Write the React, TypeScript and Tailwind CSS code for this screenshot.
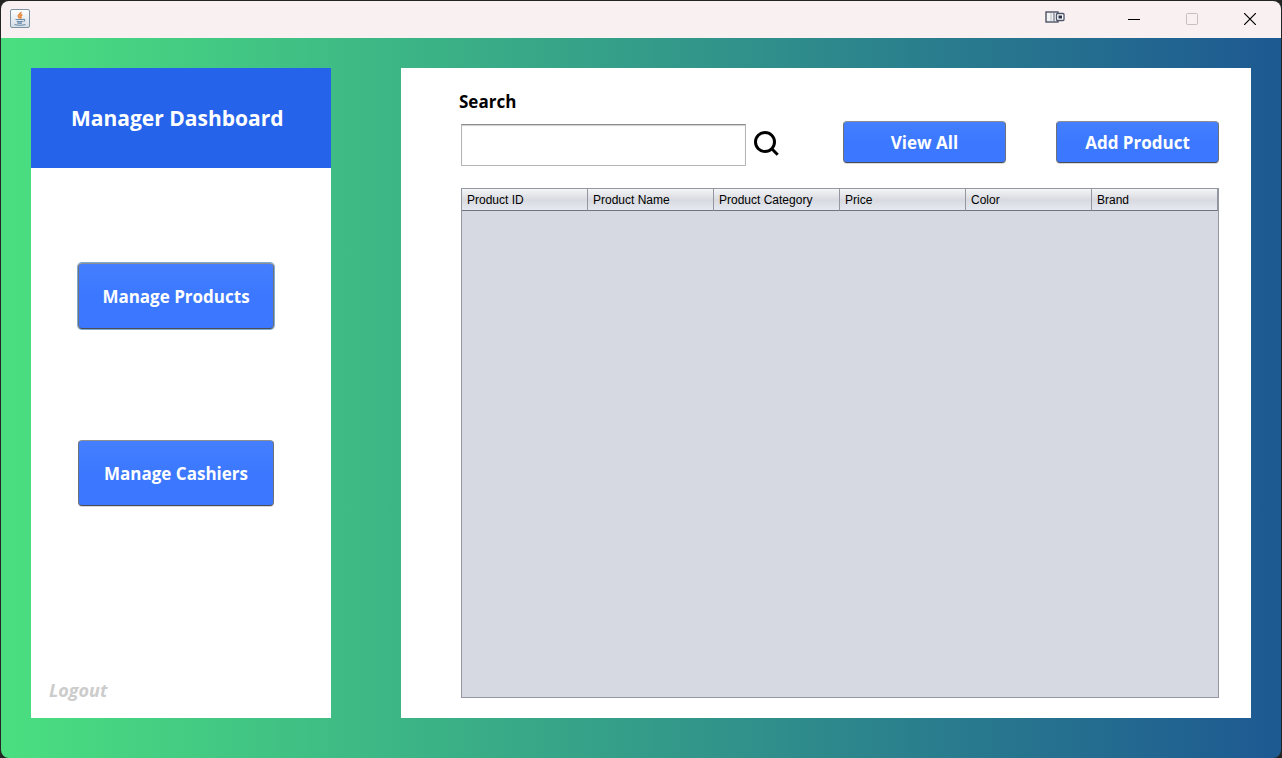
import React from "react";

const columns = ["Product ID", "Product Name", "Product Category", "Price", "Color", "Brand"];

const buttonBase =
  "rounded border border-t-[#8c9094] border-x-[#6d7178] border-b-[#4a4d55] bg-linear-to-b from-[#457fff] via-[#3b78ff] to-[#3b78ff] pt-0.5 font-bold text-white text-[17px] leading-7 shadow-[0_1px_0_#d8d8d8]";

function JavaIcon() {
  return (
    <svg width="20" height="20" viewBox="0 0 20 20" fill="none" aria-hidden="true">
      <defs>
        <linearGradient id="tile" x1="0" y1="0" x2="0" y2="1">
          <stop offset="0" stopColor="#ffffff" />
          <stop offset="1" stopColor="#d3dde5" />
        </linearGradient>
      </defs>
      <rect x="0.5" y="0.5" width="19" height="18" rx="1.5" fill="url(#tile)" stroke="#7d92a5" />
      <path d="M10.8 3c.8 1.700-3.300 2.700-2.300 4.600.4.700 1 1 1.100 1.800M12.300 5.700c-2 .8-2.300 1.600-1.500 2.500.4.500 0 1-.4 1.300" stroke="#e8893c" strokeWidth="1.800" />
      <path d="M5.500 10.500h7.700M6.700 12.200c1.800.6 4.200.6 6 0M7.300 13.900c1.500.5 3.300.5 4.700 0M13.200 10.500c2-.5 2 1.500.2 2M4.500 15.500c2.500 1 8.500 1 11 0" stroke="#6c8dab" strokeWidth="1.200" />
    </svg>
  );
}

function TitleBar() {
  return (
    <header className="flex h-[37px] items-center bg-[#f9f0f1] pb-0.5 pl-[9px]">
      <JavaIcon />
      <svg className="mr-10 mb-1 ml-auto" width="20" height="14" viewBox="0 0 20 14" fill="none" aria-hidden="true">
        <rect x="1" y="2" width="12" height="10" fill="#f2f3f5" stroke="#3f465a" strokeWidth="1.300" />
        <path d="M6 3v8" stroke="#d6d8dd" strokeWidth="2" />
        <path d="M9 3v8" stroke="#a3a8b4" strokeWidth="2" />
        <rect x="11.500" y="3.500" width="7.500" height="7" rx="1" fill="#fff" stroke="#4d5568" strokeWidth="1.300" />
        <rect x="13.500" y="5.500" width="3.500" height="3" fill="#29324a" />
      </svg>
      <button type="button" aria-label="Minimize" className="flex h-full w-[58px] items-center justify-center">
        <svg width="12" height="12" viewBox="0 0 12 12"><path d="M0 6.500h12" stroke="#000" /></svg>
      </button>
      <button type="button" disabled aria-label="Maximize" className="flex h-full w-[58px] items-center justify-center">
        <svg width="12" height="12" viewBox="0 0 12 12" fill="none"><rect x="0.500" y="0.500" width="11" height="11" rx="1" stroke="#c5bfc0" /></svg>
      </button>
      <button type="button" aria-label="Close" className="mr-0.5 flex h-full w-[58px] items-center justify-center">
        <svg width="12" height="12" viewBox="0 0 12 12"><path d="M0 0l12 12M12 0L0 12" stroke="#000" strokeWidth="1.200" /></svg>
      </button>
    </header>
  );
}

function Sidebar() {
  return (
    <nav className="flex w-[300px] shrink-0 flex-col bg-white">
      <div className="flex h-[100px] items-center bg-[#2563eb] pl-10">
        <h1 className="text-[21px] leading-8 font-bold whitespace-nowrap text-white">Manager Dashboard</h1>
      </div>
      <div className="flex flex-col gap-[111px] pt-[95px] pr-[57px] pl-[47px]">
        <button type="button" className={`${buttonBase} h-[66px] ring-1 ring-[#7fabd0]`}>Manage Products</button>
        <button type="button" className={`${buttonBase} h-[66px]`}>Manage Cashiers</button>
      </div>
      <a href="#logout" className="mt-auto mb-3.5 ml-[18px] self-start text-lg leading-7 font-bold text-[#cccccc] italic">Logout</a>
    </nav>
  );
}

function Products() {
  return (
    <main className="flex min-w-0 flex-1 flex-col bg-white pt-5 pr-8 pb-5 pl-[60px]">
      <div className="flex items-end justify-between">
        <form className="flex flex-col gap-2" onSubmit={(e) => e.preventDefault()}>
          <label htmlFor="search" className="-ml-0.5 text-[17px] leading-7 font-bold text-black">Search</label>
          <div className="flex items-center gap-2">
            <input id="search" type="text" className="h-[42px] w-[285px] border border-[#b5b5b5] border-t-[#8c8c8c] bg-white px-2 text-lg shadow-[inset_0_1px_1px_#d0d0d0] outline-none" />
            <button type="submit" aria-label="Search" className="mb-1">
              <svg width="25" height="25" viewBox="0 0 25 25" fill="none" stroke="#000" strokeWidth="3">
                <circle cx="11" cy="11" r="9.500" />
                <path d="M17.500 17.500l6.200 6.200" />
              </svg>
            </button>
          </div>
        </form>
        <div className="mb-[3px] flex gap-[50px]">
          <button type="button" className={`${buttonBase} h-[42px] w-[163px]`}>View All</button>
          <button type="button" className={`${buttonBase} h-[42px] w-[163px]`}>Add Product</button>
        </div>
      </div>
      <div className="mt-[22px] flex-1 border border-[#9297a1] bg-[#d6d9e1]">
        <table className="w-full table-fixed border-separate border-spacing-0 font-['Liberation_Sans',Arial,sans-serif] text-xs text-black">
          <thead>
            <tr className="h-[22px] bg-linear-to-b from-[#f4f5f7] via-[#d8dae0] to-[#e8eaf2]">
              {columns.map((name) => (
                <th key={name} scope="col" className="border-r border-b border-r-[#9297a1] border-b-[#70747f] p-0 pl-[5px] text-left font-normal whitespace-nowrap">
                  {name}
                </th>
              ))}
            </tr>
          </thead>
          <tbody />
        </table>
      </div>
    </main>
  );
}

export default function App() {
  return (
    <div className="flex min-h-screen flex-col bg-[#242424] pt-px pr-px pl-px font-['Open_Sans','Noto_Sans',sans-serif]">
      <div className="flex flex-1 flex-col overflow-hidden rounded-lg">
        <TitleBar />
        <div className="flex flex-1 gap-[70px] bg-[linear-gradient(90deg,#4ade80_1%,#1e5a92_99%)] px-[30px] pt-[30px] pb-10">
          <Sidebar />
          <Products />
        </div>
      </div>
    </div>
  );
}
